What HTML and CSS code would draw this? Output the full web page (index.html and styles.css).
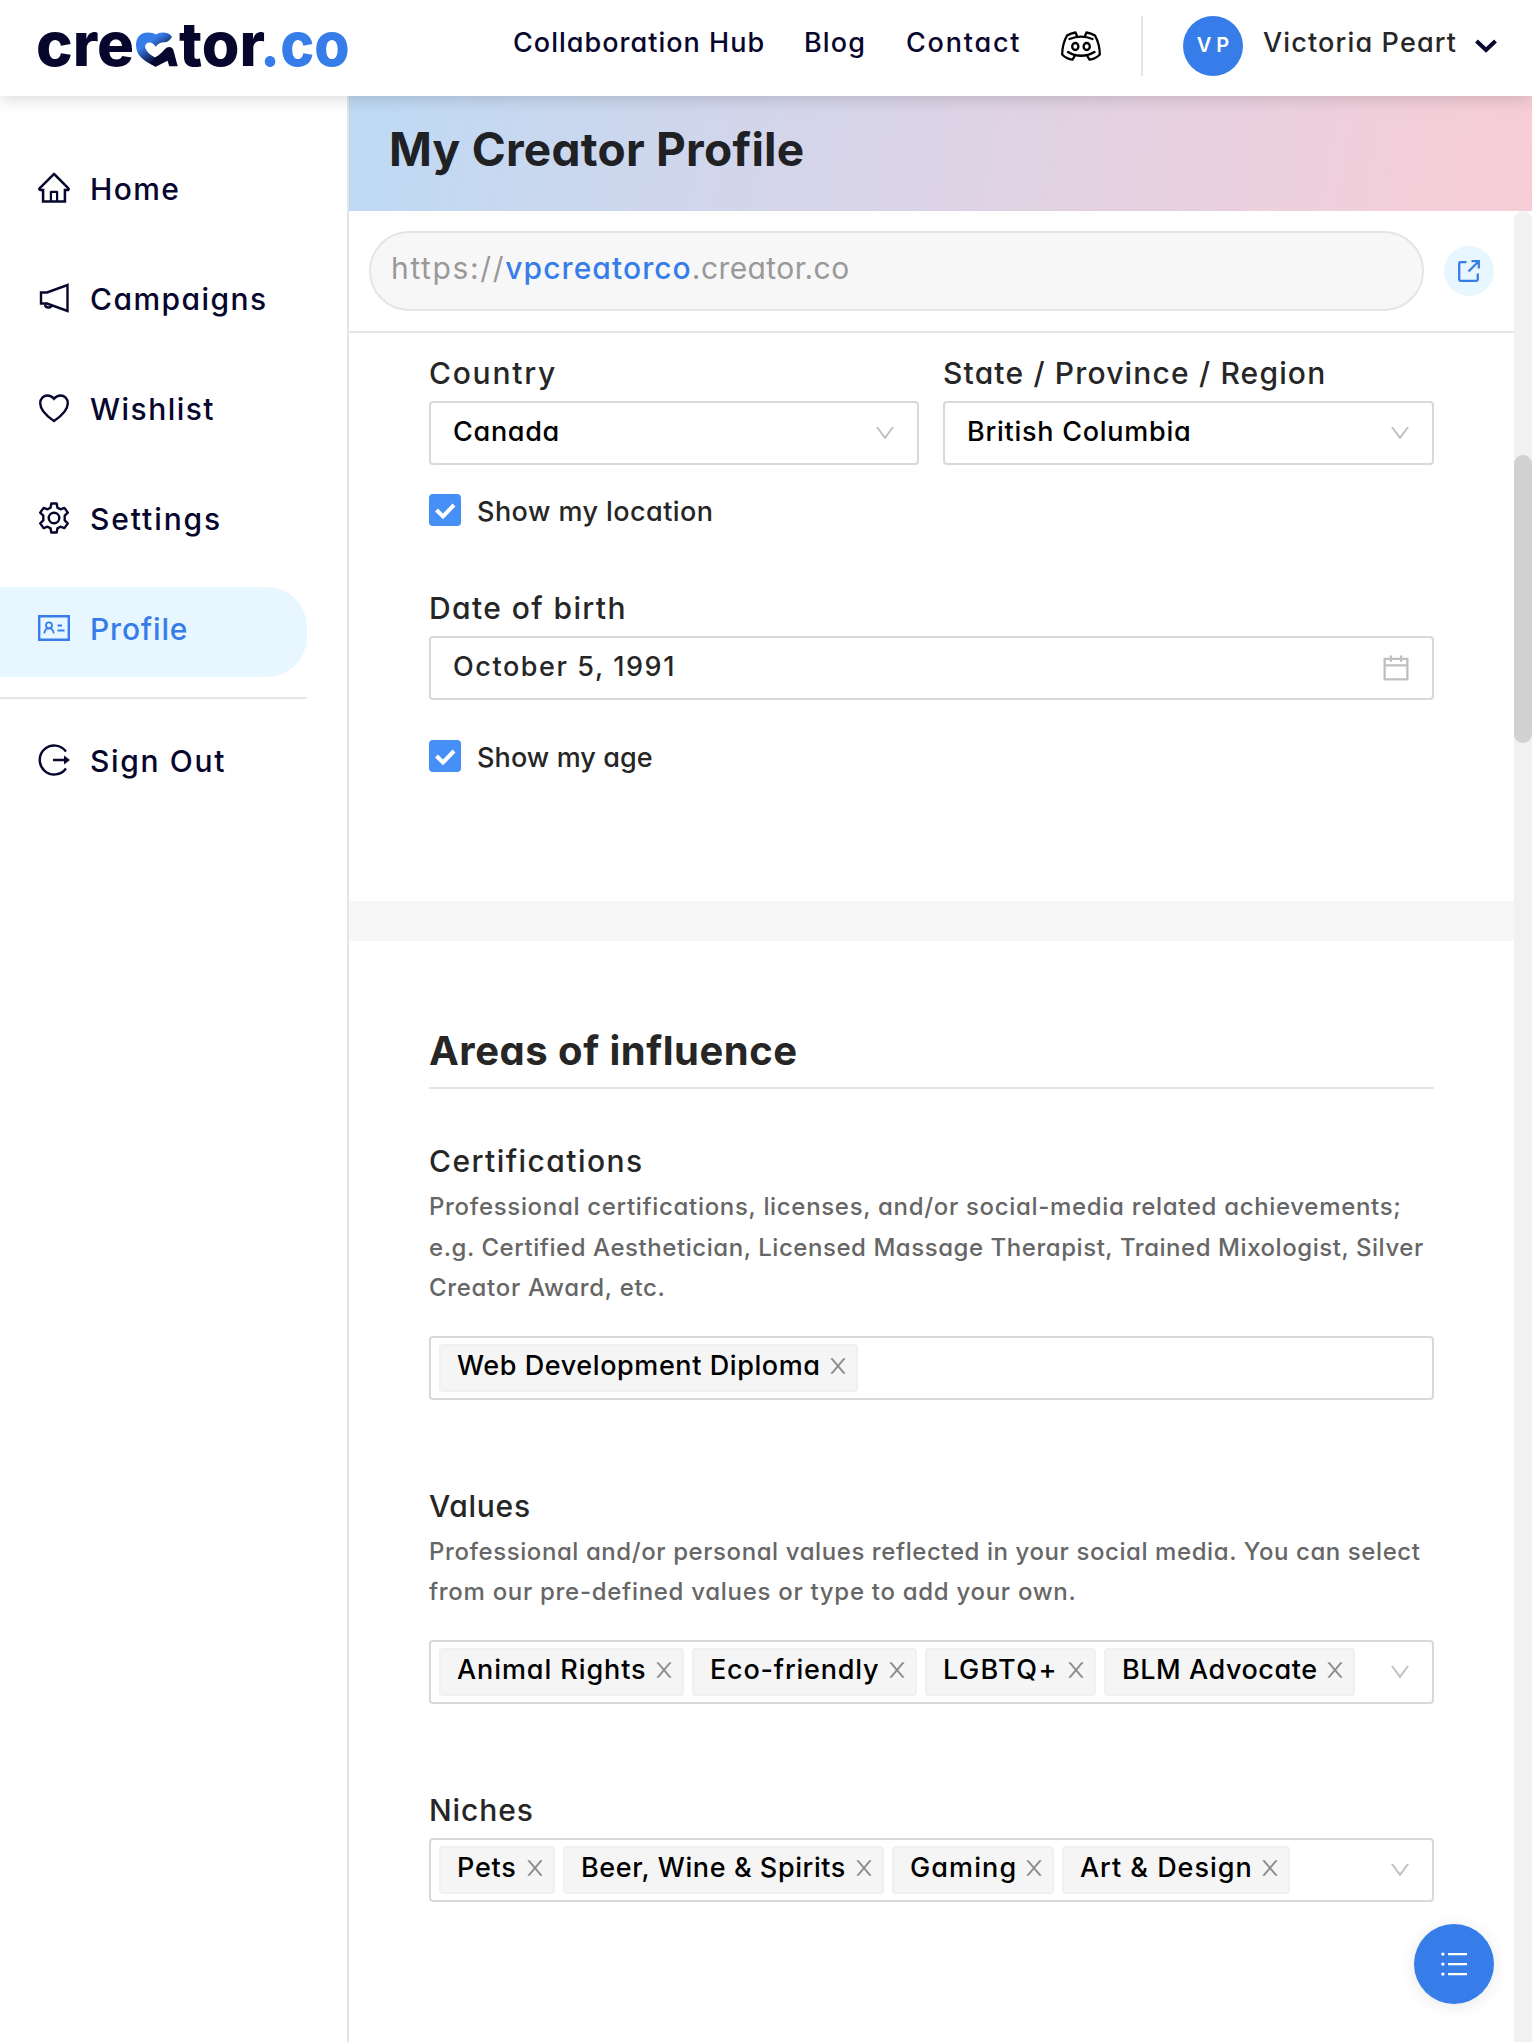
FILE: index.html
```html
<!DOCTYPE html>
<html lang="en">
<head>
<meta charset="utf-8">
<title>My Creator Profile</title>
<link rel="stylesheet" href="styles.css">
</head>
<body>
<svg class="sprite" aria-hidden="true">
  <symbol id="down" viewBox="0 0 1024 1024"><path d="M884 256h-75c-5.1 0-9.9 2.5-12.9 6.6L512 654.2 227.9 262.6c-3-4.1-7.8-6.6-12.9-6.6h-75c-6.5 0-10.3 7.4-6.5 12.7l352.6 486.1c12.8 17.6 39 17.6 51.7 0l352.6-486.1c3.9-5.3.1-12.7-6.4-12.7z"/></symbol>
  <symbol id="close" viewBox="0 0 1024 1024"><path d="M563.8 512l262.5-312.9c4.4-5.2.7-13.1-6.1-13.1h-79.8c-4.7 0-9.2 2.1-12.3 5.7L511.6 449.8 295.1 191.7c-3-3.6-7.5-5.7-12.3-5.7H203c-6.8 0-10.5 7.9-6.1 13.1L459.4 512 196.9 824.9A7.95 7.95 0 00203 838h79.8c4.7 0 9.2-2.1 12.3-5.7l216.5-258.1 216.5 258.1c3 3.6 7.5 5.7 12.3 5.7h79.8c6.8 0 10.5-7.9 6.1-13.1L563.8 512z"/></symbol>
</svg>

<header class="topbar">
  <svg class="logo" viewBox="0 0 316 60" width="316" height="60">
    <defs>
      <linearGradient id="heart" gradientUnits="userSpaceOnUse" x1="104" y1="27" x2="117" y2="46">
        <stop offset="0.15" stop-color="#377dea"/><stop offset="1" stop-color="#07062d"/>
      </linearGradient>
    </defs>
    <text x="-2" y="50" textLength="98" lengthAdjust="spacingAndGlyphs">cre</text>
    <path fill="url(#heart)" d="M117.700 50.700C106 45 98 40 98 29C98 21 103 16.500 110 16.500C113.500 16.500 116 17.300 117.700 18.500C120 17 123 16.300 126 16.500C130 16.700 132.500 18.500 134 20.700C131.500 25 129.500 26 126.500 26.200C122.500 26.300 119.500 28 117.700 30.700C115.500 27.500 113.500 26.300 111 26.500C108 26.800 106.500 29.500 107.500 32.500C109 36.500 113 39.500 117.200 41.500L122 46Z"/>
    <path fill="#07062d" d="M117.200 41.300C121 39.500 124 36.500 126.500 33.500C130 29.500 134.500 30.500 135.500 34.500L139.700 50.300H131.300L129.500 44.700L117.700 50.700L112 47.500Z"/>
    <text x="141" y="50" textLength="86" lengthAdjust="spacingAndGlyphs">tor</text>
    <text class="logo-co" x="222" y="50" textLength="89.500" lengthAdjust="spacingAndGlyphs">.co</text>
  </svg>
  <nav class="topnav">
    <a class="nav-hub">Collaboration Hub</a>
    <a class="nav-blog">Blog</a>
    <a class="nav-contact">Contact</a>
  </nav>
  <svg class="discord" viewBox="0 0 40 30" width="40" height="30" fill="none" stroke="#000" stroke-width="2.300" stroke-linejoin="round" stroke-linecap="round">
    <path d="M8.500 8C16 4.800 24 4.800 31.500 8M7 21C15 26 25 26 33.500 21"/>
    <path d="M16 5L14.500 1.500C11 2 8.500 3 6 4.500C3 10 1.200 16 1.200 23.500C4 26.500 7.500 28.300 11.500 28.700L14 24.500M24 5L25.500 1.500C29 2 31.500 3 34 4.500C37 10 38.800 16 38.800 23.500C36 26.500 32.500 28.300 28.500 28.700L26 24.500"/>
    <ellipse cx="14.300" cy="15.500" rx="3.100" ry="3.500"/><ellipse cx="25.700" cy="15.500" rx="3.100" ry="3.500"/>
  </svg>
  <span class="split"></span>
  <span class="avatar">V P</span>
  <span class="user">Victoria Peart</span>
  <svg class="chevron" viewBox="0 0 22 14" width="22" height="14" fill="none" stroke="#07062d" stroke-width="4"><path d="M1.500 2L11 11L20.500 2"/></svg>
</header>

<div class="shell">
  <aside class="sidebar">
    <a class="item"><svg class="icon" viewBox="58 70 908 900"><path fill="currentColor" d="M946.5 505L560.1 118.8l-25.900-25.900a31.500 31.500 0 00-44.400 0L77.500 505a63.900 63.900 0 00-18.800 46c.4 35.200 29.700 63.300 64.900 63.300h42.500V940h691.800V614.300h43.400c17.100 0 33.200-6.700 45.300-18.800a63.600 63.600 0 0018.700-45.300c0-17-6.700-33.100-18.800-45.200zM568 868H456V664h112v204zm217.900-325.700V868H632V640c0-22.100-17.900-40-40-40H432c-22.100 0-40 17.900-40 40v228H238.100V542.300h-96l370-369.700 23.100 23.100L882 542.300h-96.100z"/></svg><span class="home">Home</span></a>
    <a class="item"><svg class="icon line" viewBox="0 0 32 32"><path d="M3 10.500H9L29.500 3V29L9 21.500H3Z"/><path d="M7 22.500A3.600 3.600 0 0 0 14 23"/></svg><span class="campaigns">Campaigns</span></a>
    <a class="item"><svg class="icon line" viewBox="0 0 32 32"><path d="M16 29C10 25 2.200 18.500 2.200 11.300C2.200 6.500 5.500 3.500 9.500 3.500C12.500 3.500 14.500 5 16 6.800C17.500 5 19.500 3.500 22.500 3.500C26.500 3.500 29.800 6.500 29.800 11.300C29.800 18.500 22 25 16 29Z"/></svg><span class="wishlist">Wishlist</span></a>
    <a class="item"><svg class="icon line" viewBox="0 0 32 32"><path stroke-linejoin="round" d="M13.300 1.500H18.700L19.400 5.600L22.400 7.300L26.400 5.900L29.800 10.600L26.700 13.700V18.300L29.800 21.400L26.400 26.100L22.400 24.700L19.400 26.400L18.700 30.500H13.300L12.600 26.400L9.600 24.700L5.600 26.100L2.200 21.400L5.300 18.300V13.700L2.200 10.600L5.600 5.900L9.600 7.300L12.600 5.600Z"/><circle cx="16" cy="16" r="5.300"/></svg><span class="settings">Settings</span></a>
    <a class="item active"><svg class="icon line" viewBox="0 0 32 32"><path d="M1.200 4.200H30.800V27.800H1.200Z"/><path stroke-width="1.800" d="M6.300 21.500C6.500 18 8.500 16.300 11 16.300S15.500 18 15.700 21.500M19.500 13.500H24M19.500 18.500H26.500"/><circle stroke-width="1.800" cx="11" cy="13.300" r="3"/></svg><span class="profile">Profile</span></a>
    <hr class="rule">
    <a class="item"><svg class="icon line" viewBox="0 0 32 32"><path d="M28 7.500A14.500 14.500 0 1 0 28 24.500M15 16H28"/><path fill="currentColor" stroke="none" d="M26 11.500L32 16L26 20.500Z"/></svg><span class="signout">Sign Out</span></a>
  </aside>

  <main class="main">
    <div class="banner"><h1>My Creator Profile</h1></div>
    <div class="viewport">
      <div class="content">
        <div class="urlbar">
          <div class="url"><span class="scheme">https://</span><span class="slug">vpcreatorco</span><span class="domain">.creator.co</span></div>
          <a class="open"><svg viewBox="0 0 24 24" width="24" height="24" fill="none" stroke="#377dea" stroke-width="2.300"><path d="M9.500 3.200H3.500Q2.200 3.200 2.200 4.500V20.500Q2.200 21.800 3.500 21.800H19.500Q20.800 21.800 20.800 20.500V14.500M11.500 12.500L21.500 2.500M14.500 2.200H21.800V9.500"/></svg></a>
        </div>

        <section class="about">
          <div class="pair">
            <div>
              <label class="label country">Country</label>
              <div class="field"><span class="canada">Canada</span><svg class="arrow"><use href="#down"/></svg></div>
            </div>
            <div>
              <label class="label region">State / Province / Region</label>
              <div class="field"><span class="bc">British Columbia</span><svg class="arrow"><use href="#down"/></svg></div>
            </div>
          </div>
          <div class="check location"><span class="box"><svg viewBox="0 0 32 32" width="32" height="32" fill="none" stroke="#fff" stroke-width="4"><path d="M7.500 16L14 22.500L25 11"/></svg></span><span class="show-location">Show my location</span></div>
          <label class="label dob">Date of birth</label>
          <div class="field date"><span>October 5, 1991</span><svg class="calendar" viewBox="0 0 1024 1024"><path d="M880 184H712v-64c0-4.400-3.600-8-8-8h-56c-4.400 0-8 3.600-8 8v64H384v-64c0-4.400-3.600-8-8-8h-56c-4.400 0-8 3.600-8 8v64H144c-17.700 0-32 14.300-32 32v664c0 17.700 14.300 32 32 32h736c17.700 0 32-14.300 32-32V216c0-17.700-14.300-32-32-32zm-40 656H184V460h656v380zM184 392V256h128v48c0 4.400 3.600 8 8 8h56c4.400 0 8-3.600 8-8v-48h256v48c0 4.400 3.600 8 8 8h56c4.400 0 8-3.600 8-8v-48h128v136H184z"/></svg></div>
          <div class="check age"><span class="box"><svg viewBox="0 0 32 32" width="32" height="32" fill="none" stroke="#fff" stroke-width="4"><path d="M7.500 16L14 22.500L25 11"/></svg></span><span class="show-age">Show my age</span></div>
        </section>

        <section class="influence">
          <h2>Areas of influence</h2>

          <label class="label certifications">Certifications</label>
          <p class="hint"><span class="c1">Professional certifications, licenses, and/or social-media related achievements;</span><br><span class="c2">e.g. Certified Aesthetician, Licensed Massage Therapist, Trained Mixologist, Silver</span><br><span class="c3">Creator Award, etc.</span></p>
          <div class="field tags">
            <span class="tag diploma"><b>Web Development Diploma</b><svg><use href="#close"/></svg></span>
          </div>

          <label class="label next values">Values</label>
          <p class="hint"><span class="v1">Professional and/or personal values reflected in your social media. You can select</span><br><span class="v2">from our pre-defined values or type to add your own.</span></p>
          <div class="field tags">
            <span class="tag animal"><b>Animal Rights</b><svg><use href="#close"/></svg></span>
            <span class="tag eco"><b>Eco-friendly</b><svg><use href="#close"/></svg></span>
            <span class="tag lgbtq"><b>LGBTQ+</b><svg><use href="#close"/></svg></span>
            <span class="tag blm"><b>BLM Advocate</b><svg><use href="#close"/></svg></span>
            <svg class="arrow"><use href="#down"/></svg>
          </div>

          <label class="label next niches">Niches</label>
          <div class="field tags">
            <span class="tag pets"><b>Pets</b><svg><use href="#close"/></svg></span>
            <span class="tag beer"><b>Beer, Wine &amp; Spirits</b><svg><use href="#close"/></svg></span>
            <span class="tag gaming"><b>Gaming</b><svg><use href="#close"/></svg></span>
            <span class="tag art"><b>Art &amp; Design</b><svg><use href="#close"/></svg></span>
            <svg class="arrow"><use href="#down"/></svg>
          </div>
        </section>
      </div>
      <div class="scrollbar"><div class="thumb"></div></div>
    </div>
  </main>
</div>

<button class="fab" aria-label="Sections"><svg viewBox="0 0 26 24" width="26" height="24" fill="#fff"><path d="M7 1H26V3.200H7zM7 11H26V13.200H7zM7 21H26V23.200H7z"/><circle cx="1.900" cy="2.100" r="1.700"/><circle cx="1.900" cy="12.100" r="1.700"/><circle cx="1.900" cy="22.100" r="1.700"/></svg></button>
</body>
</html>
```
FILE: styles.css
```css
* { box-sizing: border-box; }

body {
  margin: 0;
  height: 2042px;
  overflow: hidden;
  background: #fff;
  color: #262626;
  font-family: Inter, "Open Sans", sans-serif;
  font-weight: 500;
  font-feature-settings: "cv11";
}

.sprite { display: none; }

/* Top bar */
.topbar {
  position: relative;
  z-index: 2;
  display: flex;
  align-items: center;
  height: 96px;
  padding: 0 35px 4px 38px;
  background: #fff;
  box-shadow: 0 2px 16px rgba(0, 0, 0, .17);
  font-size: 27px;
  line-height: 40px;
  white-space: nowrap;
}
.logo { flex: none; overflow: visible; font-size: 61px; font-weight: 800; fill: #07062d; }
.logo-co { fill: #377dea; }
.topnav { display: flex; width: 547px; margin-left: 159px; padding-bottom: 7px; color: #07062d; }
.topnav a { flex: none; }
.nav-hub { width: 291px; letter-spacing: 1.02px; }
.nav-blog { width: 102px; letter-spacing: 1.1px; }
.nav-contact { letter-spacing: 1.8px; }
.discord { flex: none; margin-left: 1px; }
.split { width: 2px; height: 60px; margin-left: 40px; background: #e5e5e5; }
.avatar {
  width: 60px;
  height: 60px;
  margin-left: 40px;
  border-radius: 50%;
  background: #377dea;
  color: #fff;
  font-size: 20px;
  font-weight: 600;
  line-height: 58px;
  text-align: center;
}
.user { width: 212px; margin-left: 20px; padding-bottom: 7px; letter-spacing: 1.15px; }
.chevron { flex: none; }

/* Sidebar */
.shell { display: flex; height: 1946px; }
.sidebar {
  display: flex;
  flex: none;
  flex-direction: column;
  gap: 20px;
  width: 349px;
  padding: 51px 40px 0 0;
  border-right: 2px solid #e5e5e5;
}
.item {
  display: flex;
  align-items: center;
  gap: 20px;
  height: 90px;
  padding: 0 0 8px 38px;
  color: #07062d;
  font-size: 30px;
}
.item span { padding-top: 2px; }
.icon { width: 32px; height: 32px; }
.line { fill: none; stroke: currentColor; stroke-width: 2.4; }
.active { border-radius: 0 40px 40px 0; background: #e8f6ff; color: #377dea; }
.rule { width: 100%; height: 2px; margin: 0; border: 0; background: #e5e5e5; }
.home { letter-spacing: 1.4px; }
.campaigns { letter-spacing: 1.45px; }
.wishlist { letter-spacing: 1.45px; }
.settings { letter-spacing: 1.9px; }
.profile { letter-spacing: .8px; }
.signout { letter-spacing: 1.65px; }

/* Main column */
.main { flex: 1; min-width: 0; }
.banner {
  display: flex;
  align-items: center;
  height: 115px;
  padding: 0 40px 9px 40px;
  background: linear-gradient(100deg, #bedaf4, #dfd3e5 55%, #f8cdd6);
}
h1 { margin: 0; font-size: 46px; font-weight: 700; letter-spacing: .26px; color: #202124; }
.viewport { display: flex; height: 1831px; }
.content { flex: 1; }
.scrollbar { width: 18px; padding-top: 244px; border-radius: 9px 9px 0 0; background: #f1f1f1; }
.thumb { height: 288px; border-radius: 9px; background: #d1d1d1; }

.urlbar {
  display: flex;
  align-items: center;
  gap: 20px;
  height: 122px;
  padding: 0 20px;
  border-bottom: 2px solid #e5e5e5;
}
.url {
  flex: 1;
  height: 80px;
  padding: 0 20px;
  border: 2px solid #e5e5e5;
  border-radius: 40px;
  background: #f7f7f7;
  color: #999;
  font-size: 30px;
  font-weight: 400;
  line-height: 71px;
}
.scheme { letter-spacing: 1.64px; }
.slug { color: #377dea; font-weight: 500; letter-spacing: 1.07px; }
.domain { letter-spacing: .42px; }
.open {
  display: flex;
  align-items: center;
  justify-content: center;
  width: 50px;
  height: 50px;
  border-radius: 50%;
  background: #e8f6ff;
}

/* Form */
.about { height: 568px; padding: 20px 80px 0; }
.pair { display: grid; grid-template-columns: 490px 491px; gap: 24px; }
.label { display: block; margin-bottom: 8px; font-size: 30px; line-height: 40px; }
.country { letter-spacing: 1.75px; }
.region { letter-spacing: 1.17px; }
.dob { margin-top: 62px; letter-spacing: 1.4px; }
.field {
  display: flex;
  align-items: center;
  justify-content: space-between;
  height: 64px;
  padding: 0 20px 0 22px;
  border: 2px solid #d9d9d9;
  border-radius: 4px;
  color: #000;
  font-size: 27px;
}
.field > span:not(.tag) { padding-bottom: 4px; }
.canada { letter-spacing: .7px; }
.bc { letter-spacing: .74px; }
.date { color: #262626; letter-spacing: 1.58px; }
.arrow { width: 24px; height: 24px; margin-left: auto; fill: #bfbfbf; }
.calendar { width: 32px; height: 32px; fill: #bfbfbf; }
.check { display: flex; align-items: center; gap: 16px; height: 32px; font-size: 27px; }
.check span:last-child { padding-top: 2px; }
.location { margin-top: 29px; }
.age { margin-top: 40px; }
.box { width: 32px; height: 32px; border-radius: 4px; background: #458ff6; }
.show-location { letter-spacing: .45px; }
.show-age { letter-spacing: .1px; }

.influence { padding: 84px 80px 0; border-top: 40px solid #f7f7f7; }
h2 {
  margin: 0 0 52px;
  padding-bottom: 10px;
  border-bottom: 2px solid #e5e5e5;
  font-size: 40px;
  font-weight: 700;
  line-height: 52px;
  letter-spacing: .5px;
}
.certifications { letter-spacing: 1.43px; }
.values { letter-spacing: .7px; }
.niches { letter-spacing: .9px; }
.next { margin-top: 86px; }
.hint { margin: -2px 0 27px; color: #666; font-size: 24px; line-height: 40.5px; white-space: nowrap; }
.c1 { letter-spacing: .68px; }
.c2 { letter-spacing: .55px; }
.c3 { letter-spacing: .69px; }
.v1 { letter-spacing: .58px; }
.v2 { letter-spacing: .7px; }

.tags { justify-content: flex-start; gap: 8px; padding-left: 8px; }
.tag {
  display: flex;
  align-items: center;
  justify-content: space-between;
  height: 48px;
  padding: 0 6px 4px 16px;
  border: 2px solid #f0f0f0;
  border-radius: 4px;
  background: #f5f5f5;
  white-space: nowrap;
}
.tag b { font-weight: 500; }
.tag svg { width: 24px; height: 24px; fill: #8c8c8c; }
.diploma { width: 419px; letter-spacing: .58px; }
.animal { width: 245px; letter-spacing: .92px; }
.eco { width: 225px; letter-spacing: .8px; }
.lgbtq { width: 171px; letter-spacing: 1.4px; }
.blm { width: 251px; letter-spacing: .55px; }
.pets { width: 116px; letter-spacing: .8px; }
.beer { width: 321px; letter-spacing: .58px; }
.gaming { width: 162px; letter-spacing: 1.1px; }
.art { width: 228px; letter-spacing: .98px; }

/* Floating button */
.fab {
  position: absolute;
  top: 1924px;
  left: 1414px;
  display: flex;
  align-items: center;
  justify-content: center;
  width: 80px;
  height: 80px;
  padding: 0;
  border: 0;
  border-radius: 50%;
  background: #377dea;
  box-shadow: 0 2px 16px rgba(0, 0, 0, .1);
}
```
